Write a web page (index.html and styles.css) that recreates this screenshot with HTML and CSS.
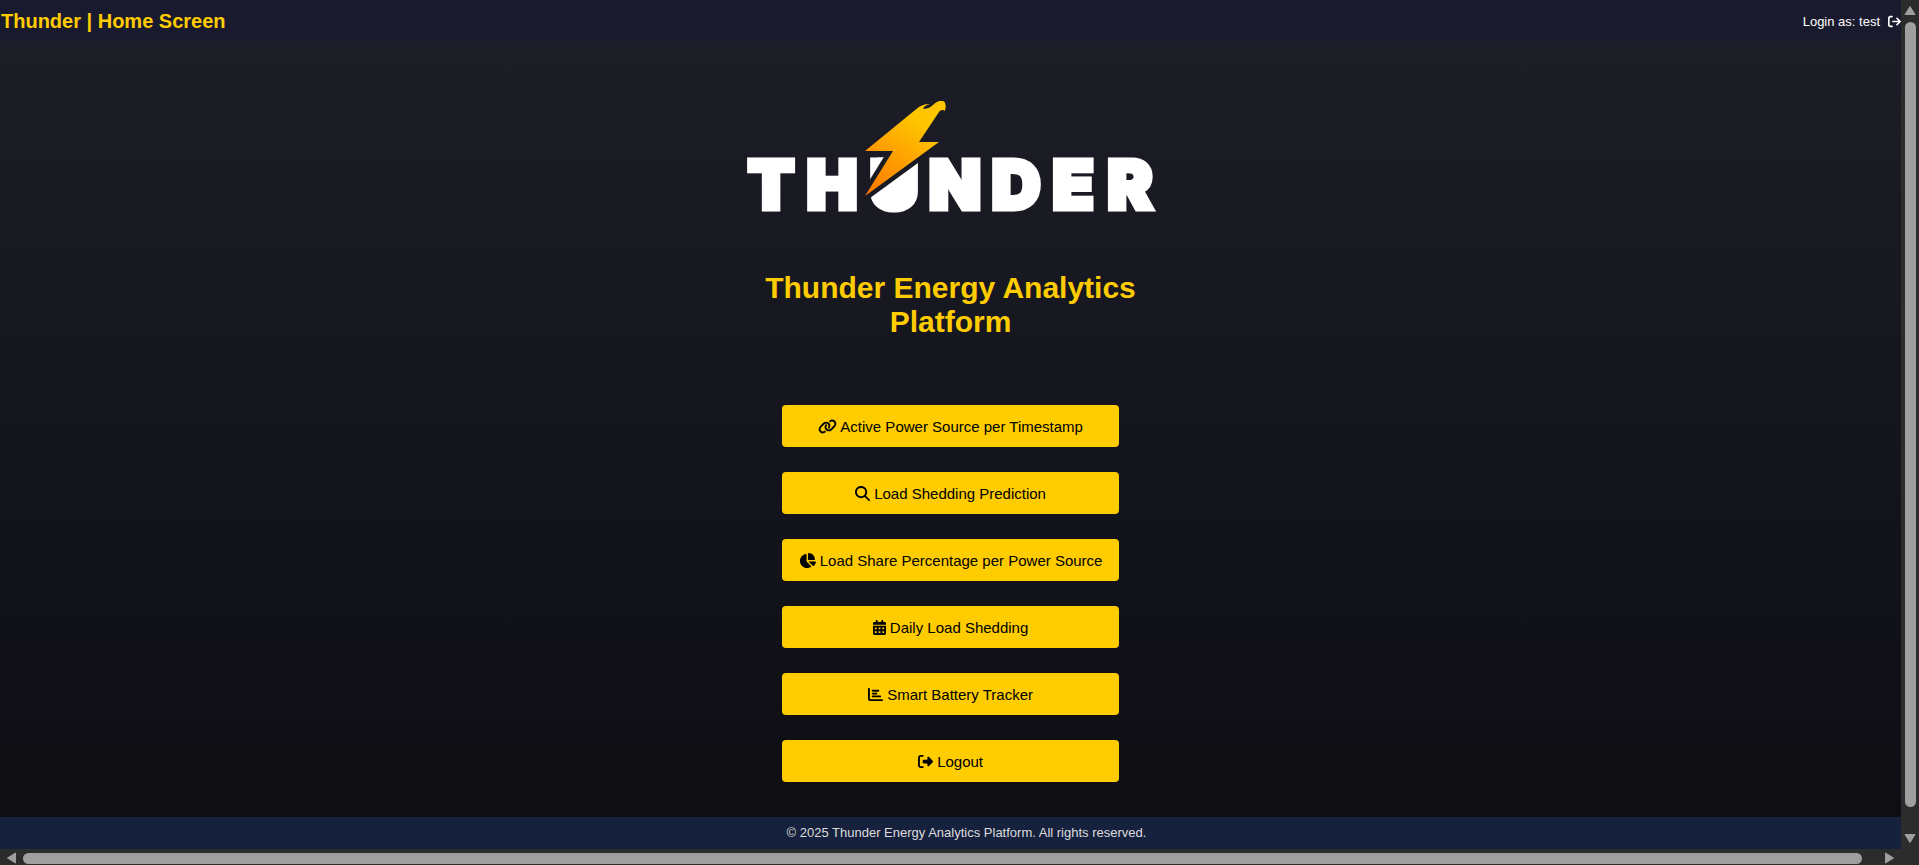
FILE: index.html
```html
<!DOCTYPE html>
<html lang="en">
<head>
<meta charset="utf-8">
<title>Thunder | Home Screen</title>
<link rel="stylesheet" href="styles.css">
</head>
<body>
<div class="window">
  <div class="page">
    <header class="topbar">
      <div class="topbar-title">Thunder | Home Screen</div>
      <div class="user">
        <span>Login as: test</span>
        <a class="user-logout" href="#" aria-label="Log out"><svg class="icon" viewBox="0 0 512 512"><path d="M502.6 278.6c12.5-12.5 12.5-32.8 0-45.3l-128-128c-12.5-12.5-32.8-12.5-45.3 0s-12.5 32.8 0 45.3L402.7 224 192 224c-17.7 0-32 14.3-32 32s14.3 32 32 32l210.7 0-73.4 73.4c-12.5 12.5-12.5 32.8 0 45.3s32.8 12.5 45.3 0l128-128zM160 96c17.7 0 32-14.3 32-32s-14.3-32-32-32L96 32C43 32 0 75 0 128L0 384c0 53 43 96 96 96l64 0c17.7 0 32-14.3 32-32s-14.3-32-32-32l-64 0c-17.7 0-32-14.3-32-32l0-256c0-17.7 14.3-32 32-32l64 0z"/></svg></a>
      </div>
    </header>

    <main class="content">
      <svg class="logo" viewBox="1 1 420 132" role="img" aria-label="Thunder">
        <defs>
          <linearGradient id="boltFill" gradientUnits="userSpaceOnUse" x1="130" y1="92" x2="182" y2="22">
            <stop offset="0" stop-color="#ff7a00"/>
            <stop offset="1" stop-color="#ffc600"/>
          </linearGradient>
          <path id="bolt" d="M125 51L177 8.500C181 5 186 3.500 190 4C186 5 184 6.500 183 8.500C188 9.500 191 7 194 4C197 1.500 200 0 203 1C206.500 2.500 206 8 204.700 11C203.500 9.500 201 9.500 199 12L179 42H199L125 96L153 51Z"/>
          <mask id="boltGap" maskUnits="userSpaceOnUse" x="0" y="0" width="424" height="134">
            <rect width="424" height="134" fill="#fff"/>
            <use href="#bolt" fill="#000" stroke="#000" stroke-width="9"/>
          </mask>
        </defs>
        <g class="wordmark" mask="url(#boltGap)">
          <path d="M140 60H168V98H140Z"/>
          <text y="109"><tspan x="31">T</tspan><tspan x="92">H</tspan><tspan x="154">U</tspan><tspan x="215">N</tspan><tspan x="276">D</tspan><tspan x="333">E</tspan><tspan x="390">R</tspan></text>
        </g>
        <use href="#bolt" fill="url(#boltFill)"/>
      </svg>

      <h1 class="title">Thunder Energy Analytics Platform</h1>

      <nav class="menu">
        <button class="menu-button" type="button"><svg class="icon icon-wide" viewBox="0 0 640 512"><path d="M579.8 267.7c56.5-56.5 56.5-148 0-204.5c-50-50-128.8-56.5-186.3-15.4l-1.6 1.1c-14.4 10.3-17.7 30.3-7.4 44.6s30.3 17.7 44.6 7.4l1.6-1.1c32.1-22.9 76-19.3 103.8 8.6c31.5 31.5 31.5 82.500 0 114L422.3 334.8c-31.5 31.5-82.5 31.5-114 0c-27.9-27.9-31.5-71.8-8.6-103.8l1.1-1.6c10.3-14.4 6.900-34.400-7.400-44.600s-34.400-6.900-44.600 7.400l-1.100 1.600C206.500 251.200 213 330 263 380c56.500 56.500 148 56.500 204.500 0L579.800 267.700zM60.200 244.300c-56.500 56.500-56.500 148 0 204.500c50 50 128.800 56.500 186.300 15.400l1.600-1.100c14.400-10.300 17.700-30.300 7.400-44.600s-30.300-17.700-44.600-7.400l-1.600 1.100c-32.100 22.900-76 19.300-103.800-8.600C74 372 74 321 105.500 289.500L217.700 177.200c31.500-31.500 82.500-31.500 114 0c27.900 27.900 31.500 71.800 8.600 103.900l-1.100 1.600c-10.300 14.400-6.900 34.400 7.400 44.600s34.400 6.900 44.600-7.400l1.100-1.600C433.500 260.800 427 182 377 132c-56.500-56.500-148-56.500-204.500 0L60.200 244.300z"/></svg> Active Power Source per Timestamp</button>
        <button class="menu-button" type="button"><svg class="icon" viewBox="0 0 512 512"><path d="M416 208c0 45.9-14.9 88.3-40 122.7L502.6 457.4c12.5 12.5 12.5 32.8 0 45.3s-32.8 12.5-45.3 0L330.7 376c-34.4 25.2-76.8 40-122.7 40C93.1 416 0 322.9 0 208S93.1 0 208 0S416 93.1 416 208zM208 352a144 144 0 1 0 0-288 144 144 0 1 0 0 288z"/></svg> Load Shedding Prediction</button>
        <button class="menu-button" type="button"><svg class="icon icon-medium" viewBox="0 0 576 512"><path d="M304 240V16.6c0-9 7-16.6 16-16.6C443.7 0 544 100.3 544 224c0 9-7.6 16-16.6 16H304zM32 272C32 150.7 122.1 50.3 239 34.3c9.2-1.3 17 6.1 17 15.4V288L412.5 444.5c6.7 6.7 6.2 17.7-1.5 23.1C371.8 495.6 323.8 512 272 512C139.5 512 32 404.6 32 272zm526.4 16c9.3 0 16.6 7.8 15.4 17c-7.7 55.9-34.6 105.6-73.9 142.3c-6 5.6-15.4 5.2-21.2-.7L320 288H558.4z"/></svg> Load Share Percentage per Power Source</button>
        <button class="menu-button" type="button"><svg class="icon icon-narrow" viewBox="0 0 448 512"><path fill-rule="evenodd" d="M128 0c17.7 0 32 14.3 32 32V64H288V32c0-17.7 14.3-32 32-32s32 14.3 32 32V64h48c26.5 0 48 21.5 48 48v48H0V112C0 85.5 21.5 64 48 64H96V32c0-17.7 14.3-32 32-32zM0 192H448V464c0 26.5-21.5 48-48 48H48c-26.5 0-48-21.5-48-48V192zM64 256h64v64H64zM192 256h64v64H192zM320 256h64v64H320zM64 384h64v64H64zM192 384h64v64H192zM320 384h64v64H320z"/></svg> Daily Load Shedding</button>
        <button class="menu-button" type="button"><svg class="icon" viewBox="0 0 512 512"><path d="M32 32c17.7 0 32 14.3 32 32V400c0 8.8 7.2 16 16 16H480c17.7 0 32 14.3 32 32s-14.3 32-32 32H80c-44.200 0-80-35.800-80-80V64C0 46.300 14.300 32 32 32zm96 96c0-17.700 14.300-32 32-32l192 0c17.700 0 32 14.300 32 32s-14.300 32-32 32l-192 0c-17.700 0-32-14.300-32-32zm32 64H288c17.700 0 32 14.300 32 32s-14.300 32-32 32H160c-17.700 0-32-14.300-32-32s14.300-32 32-32zm0 96H416c17.700 0 32 14.300 32 32s-14.300 32-32 32H160c-17.700 0-32-14.300-32-32s14.300-32 32-32z"/></svg> Smart Battery Tracker</button>
        <button class="menu-button" type="button"><svg class="icon" viewBox="0 0 512 512"><path d="M377.9 105.9L500.7 228.7c7.2 7.2 11.3 17.1 11.3 27.3s-4.1 20.1-11.3 27.3L377.9 406.1c-6.4 6.4-15 9.9-24 9.9c-18.7 0-33.9-15.2-33.9-33.9l0-62.1-128 0c-17.7 0-32-14.3-32-32l0-64c0-17.7 14.3-32 32-32l128 0 0-62.1c0-18.7 15.2-33.9 33.9-33.9c9 0 17.6 3.6 24 9.9zM160 96L96 96c-17.7 0-32 14.3-32 32l0 256c0 17.7 14.3 32 32 32l64 0c17.7 0 32 14.3 32 32s-14.3 32-32 32l-64 0c-53 0-96-43-96-96L0 128C0 75 43 32 96 32l64 0c17.7 0 32 14.3 32 32s-14.3 32-32 32z"/></svg> Logout</button>
      </nav>
    </main>

    <footer class="footer">© 2025 Thunder Energy Analytics Platform. All rights reserved.</footer>
  </div>

  <div class="scrollbar scrollbar-vertical" aria-hidden="true">
    <svg class="arrow" viewBox="0 0 12 10"><path d="M6 1L11 9H1Z"/></svg>
    <div class="thumb"></div>
    <svg class="arrow" viewBox="0 0 12 10"><path d="M1 1H11L6 9Z"/></svg>
  </div>
  <div class="scrollbar scrollbar-horizontal" aria-hidden="true">
    <svg class="arrow" viewBox="0 0 10 12"><path d="M9 1V11L1 6Z"/></svg>
    <div class="thumb"></div>
    <svg class="arrow" viewBox="0 0 10 12"><path d="M1 1V11L9 6Z"/></svg>
  </div>
  <div class="scrollbar"></div>
</div>
</body>
</html>
```
FILE: styles.css
```css
* {
  box-sizing: border-box;
}

body {
  margin: 0;
  font-family: "Liberation Sans", Arial, sans-serif;
  color: #fff;
  background: #2c2c2c;
}

.window {
  display: grid;
  grid-template-columns: 1fr 18px;
  grid-template-rows: 1fr 16px;
  min-height: 100vh;
}

.page {
  display: flex;
  flex-direction: column;
  background: linear-gradient(#1e1e28, #15151e 50%, #0d0e12);
}

.topbar {
  display: flex;
  align-items: center;
  justify-content: space-between;
  min-height: 41px;
  padding: 2px 0 0 1px;
  background: #1a1a2e;
}

.topbar-title {
  font-size: 20px;
  font-weight: bold;
  color: #fc0;
}

.user {
  display: flex;
  align-items: center;
  gap: 8px;
  font-size: 13px;
}

.user-logout {
  display: flex;
  color: #fff;
}

.icon {
  width: 1em;
  height: 1em;
  fill: currentColor;
  vertical-align: -2px;
}

.icon-wide {
  width: 19px;
}

.icon-medium {
  width: 17px;
}

.icon-narrow {
  width: 13px;
}

.content {
  flex: 1;
  display: flex;
  flex-direction: column;
  align-items: center;
  padding: 60px 0 35px;
}

.logo {
  width: 420px;
  max-width: 100%;
}

.wordmark {
  fill: #fff;
  stroke: #fff;
  stroke-width: 5px;
  font-family: Inter, "DejaVu Sans", sans-serif;
  font-size: 68px;
  font-weight: 900;
  text-anchor: middle;
}

.title {
  max-width: 420px;
  margin: 38px 0 66px;
  font-size: 30px;
  line-height: 34px;
  text-align: center;
  color: #fc0;
}

.menu {
  display: grid;
  gap: 25px;
}

.menu-button {
  min-height: 42px;
  padding: 0 17px;
  border: 0;
  border-radius: 4px;
  font-family: inherit;
  font-size: 15px;
  color: #000;
  background: #fc0;
  cursor: pointer;
}

.footer {
  min-height: 32px;
  padding-left: 32px;
  font-size: 13px;
  line-height: 32px;
  text-align: center;
  color: #ddd;
  background: #16213e;
}

.scrollbar {
  display: flex;
  align-items: center;
  background: #2c2c2c;
}

.scrollbar-vertical {
  flex-direction: column;
  gap: 6px;
  padding: 5px 0;
}

.scrollbar-vertical .arrow {
  width: 12px;
  height: 11px;
}

.scrollbar-vertical .thumb {
  flex: 1;
  width: 11px;
  margin-bottom: 20px;
}

.scrollbar-horizontal {
  gap: 6px;
  padding: 2px 6px 0;
}

.scrollbar-horizontal .arrow {
  width: 11px;
  height: 12px;
}

.scrollbar-horizontal .thumb {
  flex: 1;
  height: 11px;
  margin-right: 16px;
}

.arrow {
  fill: #9f9f9f;
  stroke: #9f9f9f;
  stroke-linejoin: round;
}

.thumb {
  border-radius: 6px;
  background: #9f9f9f;
}
```
